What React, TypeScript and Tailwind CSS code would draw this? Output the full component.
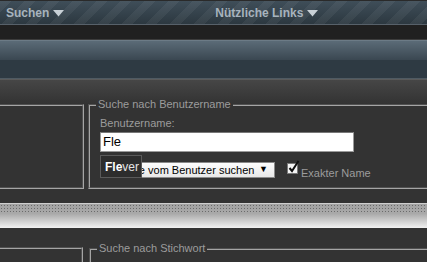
import React from "react";

const Arrow = () => (
    <svg width="11" height="7" viewBox="0 0 11 7" className="ml-[4px] mt-[1px]">
        <path d="M0 0 H11 L5.5 6.5 Z" fill="#c8d0d6"/>
    </svg>
);

const CheckMark = () => (
    <svg width="13" height="14" viewBox="0 0 13 14">
        <rect x="0.5" y="3.5" width="10" height="10" fill="#f4f4f4" stroke="#7a7a7a"/>
        <path d="M2.5 8 L5 11 L11.5 1" fill="none" stroke="#111" strokeWidth="2"/>
    </svg>
);

export default function App() {
    return (
        <div className="w-[427px] h-[262px] overflow-hidden bg-[#333333] font-['Liberation_Sans',Arial,sans-serif]">
            {/* top navigation */}
            <div className="h-px bg-[#2a2a2a]"/>
            <div className="relative h-[23px] bg-[linear-gradient(#3f4e59,#2c3840)]">
                <div className="absolute inset-0 bg-[repeating-linear-gradient(135deg,rgba(255,255,255,0.05)_0px,rgba(255,255,255,0.05)_8px,transparent_8px,transparent_17px)]"/>
                <div className="relative flex items-center h-full text-[12px] font-bold text-[#a7b3bd]">
                    <div className="flex items-center ml-[6px]">Suchen<Arrow/></div>
                    <div className="flex items-center ml-[151px]">Nützliche Links<Arrow/></div>
                </div>
            </div>
            <div className="h-px bg-[#57616a]"/>
            <div className="h-[14px] bg-[#202020]"/>
            <div className="h-px bg-[#3c3c3c]"/>
            <div className="h-px bg-[#6c7b86]"/>

            {/* header bar */}
            <div className="h-[19px] bg-[linear-gradient(#5b6b77,#3a4751)]"/>
            <div className="h-[18px] bg-[#2e3a43]"/>
            <div className="h-px bg-[#4f5a62]"/>
            <div className="h-px bg-[#5a5a5a]"/>

            {/* first section */}
            <div className="bg-[linear-gradient(#464646,#333333_24px)] pt-[18px] flex">
                <div className="w-[84px] h-[85px] mt-[6px] border-2 border-l-0 border-[#a5a5a5] [border-style:groove]"/>
                <fieldset className="ml-[4px] flex-1 -mr-[20px] h-[91px] border-2 border-[#a5a5a5] [border-style:groove] pl-[10px] pt-0">
                    <legend className="-ml-[4px] px-[2px] text-[11px] leading-[13px] text-[#9c9c9c]">Suche nach Benutzername</legend>
                    <div className="mt-[6px] text-[11px] leading-[13px] text-[#9c9c9c]">Benutzername:</div>
                    <div className="mt-[2px] w-[254px] h-[20px] bg-white border border-[#9a9a9a] border-t-[#777] flex items-center pl-[2px] text-[13px] text-black">
                        Fle
                    </div>
                    <div className="relative mt-[8px] flex items-center">
                        <div className="w-[175px] h-[16px] bg-[linear-gradient(#fdfdfd,#e8e8e8)] border border-[#8a8a8a] flex items-center justify-between pl-[3px] pr-[6px] text-[11px] text-black">
                            <span>Beiträge vom Benutzer suchen</span>
                            <span className="text-[9px]">▼</span>
                        </div>
                        <div className="ml-[12px] -mt-[7px]"><CheckMark/></div>
                        <div className="ml-[1px] mt-[7px] text-[11px] leading-[13px] text-[#9c9c9c]">Exakter Name</div>
                        <div className="absolute left-0 top-[-5px] w-[42px] h-[23px] bg-[#2d2d2d] border border-[#5a5a5a] flex items-center pl-[4px] text-[12px] text-[#e4e4e4]">
                            <span className="font-bold text-white">Fle</span>ver
                        </div>
                    </div>
                </fieldset>
            </div>

            {/* separator band */}
            <div className="mt-[14px] h-px bg-[#cfcfcf]"/>
            <div className="h-[24px] bg-[linear-gradient(#a3a3a3,#a9a9a9_40%,#f2f2f2)]">
                <div className="h-[10px] bg-[radial-gradient(circle,#6b6b6b_0.7px,transparent_1px)] bg-[length:3px_3px]"/>
            </div>

            {/* second section */}
            <div className="pt-[14px] flex">
                <div className="w-[83px] h-[40px] mt-[5px] border-2 border-l-0 border-[#a5a5a5] [border-style:groove]"/>
                <fieldset className="ml-[6px] flex-1 -mr-[20px] h-[60px] border-2 border-[#a5a5a5] [border-style:groove] pl-[10px] pt-0">
                    <legend className="-ml-[4px] px-[2px] text-[11px] leading-[13px] text-[#9c9c9c]">Suche nach Stichwort</legend>
                </fieldset>
            </div>
        </div>
    );
}
